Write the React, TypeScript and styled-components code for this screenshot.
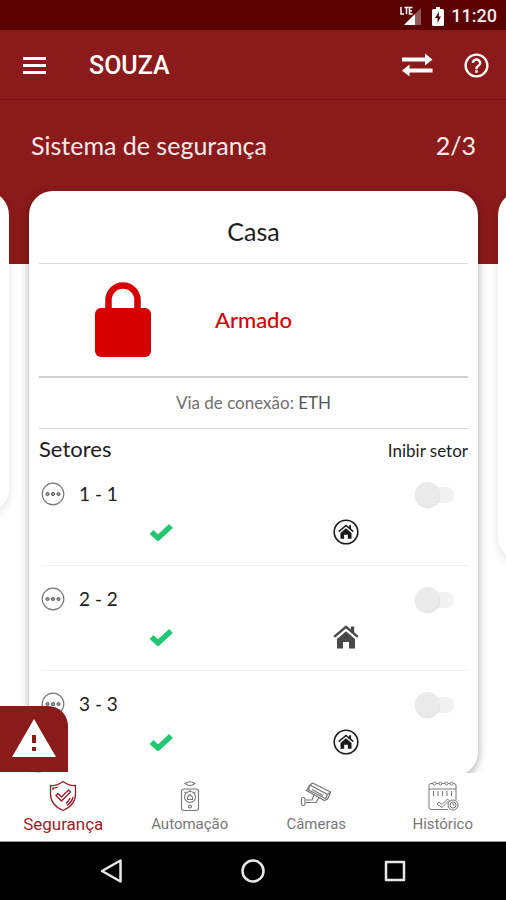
import React from "react";
import styled, { createGlobalStyle } from "styled-components";
import { MdHelpOutline, MdWarning } from "react-icons/md";

const RED = "#8b1a1a";
const LATO = 'Lato, "Open Sans", sans-serif';
const ROBOTO = 'Roboto, "Noto Sans", sans-serif';

const GlobalStyle = createGlobalStyle`
  *, *::before, *::after { box-sizing: border-box; }
  body { margin: 0; background: #fff; font-family: ${LATO}; color: #1c1c1c; }
  h1, h2, h3, p, ul { margin: 0; padding: 0; font-weight: 400; }
  ul { list-style: none; }
  button { border: 0; padding: 0; background: none; color: inherit; font: inherit; cursor: pointer; }
  svg { display: block; }
`;

const Screen = styled.div`
  display: flex;
  flex-direction: column;
  height: 100vh;
  overflow: hidden;
`;

const StatusBar = styled.div`
  display: flex;
  align-items: center;
  justify-content: flex-end;
  flex: none;
  height: 30px;
  padding: 2px 9px 0 0;
  background: #5a0000;
  color: #f6ecec;
  font: 500 18px/28px ${ROBOTO};
`;

const StatusIcons = styled.div`
  display: flex;
  align-items: center;
  gap: 10px;
  margin-right: 7px;
`;

const AppBar = styled.header`
  display: flex;
  align-items: center;
  flex: none;
  height: 70px;
  padding: 1px 15px 0 22px;
  background: ${RED};
  color: #fff;
  border-bottom: 1px solid #7a1515;
`;

const IconButton = styled.button`
  display: flex;
  align-items: center;
  justify-content: center;
`;

const AppTitle = styled.h1`
  flex: 1;
  margin-left: 42px;
  padding-top: 2px;
  font: 500 25px/32px ${ROBOTO};
`;

const AppActions = styled.div`
  display: flex;
  align-items: center;
  gap: 29px;
`;

const Main = styled.main`
  position: relative;
  flex: 1;
  min-height: 0;
  overflow: hidden;
  background: linear-gradient(${RED} 164px, #fff 164px);
`;

const Banner = styled.div`
  display: flex;
  align-items: center;
  justify-content: space-between;
  height: 91px;
  padding: 0 30px 2px 31px;
  color: #f7eaea;
  font-size: 25px;
  line-height: 30px;
`;

const BannerTitle = styled.h2`
  font-size: 25px;
`;

const Carousel = styled.div`
  display: flex;
  justify-content: center;
  align-items: flex-start;
  gap: 20px;
  padding: 0 28px 0 29px;
`;

const Card = styled.section<{ $height?: number }>`
  flex: 0 0 100%;
  min-height: ${(p) => (p.$height ? `${p.$height}px` : "0")};
  padding: 0 10px;
  border-radius: 24px;
  background: #fff;
  box-shadow: 0 3px 8px rgba(0, 0, 0, 0.35);
`;

const SideCard = styled(Card)`
  box-shadow: 0 3px 8px rgba(0, 0, 0, 0.12);
`;

const CardTitle = styled.h2`
  padding: 23px 0 15px;
  border-bottom: 1px solid #dcdcdc;
  text-align: center;
  font-size: 25px;
  line-height: 34px;
`;

const ArmState = styled.div`
  display: grid;
  grid-template-columns: 39% 22% 39%;
  align-items: center;
  justify-items: center;
  height: 114px;
  border-bottom: 2px solid #cfcfcf;
  color: #d50000;
  font-size: 22px;
  font-weight: 500;
  line-height: 28px;
`;

const Connection = styled.p`
  border-bottom: 1px solid #d6d6d6;
  color: #6f6f6f;
  text-align: center;
  font-size: 17px;
  line-height: 50px;
`;

const Strong = styled.span`
  color: #555;
`;

const SectorsHead = styled.div`
  display: flex;
  align-items: center;
  justify-content: space-between;
  height: 32px;
  padding-top: 7px;
`;

const SectorsTitle = styled.h3`
  font-size: 22px;
  line-height: 24px;
`;

const InhibitLabel = styled.span`
  padding-top: 4px;
  font-size: 17px;
  line-height: 20px;
`;

const SectorRow = styled.li`
  display: flex;
  flex-direction: column;
  gap: 10px;
  height: 105px;
  margin-left: 2px;
  padding-top: 19px;
  border-bottom: 1px solid #f1f1f1;
  &:last-child { border-bottom: 0; }
`;

const SectorTop = styled.div`
  display: flex;
  align-items: center;
  height: 28px;
  padding-right: 14px;
`;

const SectorName = styled.label`
  flex: 1;
  margin-left: 14px;
  font-size: 19px;
  line-height: 28px;
`;

const SectorIcons = styled.div`
  display: grid;
  grid-template-columns: 1fr 1fr;
  align-items: center;
  justify-items: center;
  height: 28px;
  padding: 0 30px 0 28px;
`;

const Switch = styled.input`
  appearance: none;
  position: relative;
  width: 39px;
  height: 26px;
  margin: 2px 0 0;
  cursor: pointer;
  &::before {
    content: "";
    position: absolute;
    inset: 5px 0 5px 12px;
    border-radius: 8px;
    background: #f1f1f1;
  }
  &::after {
    content: "";
    position: absolute;
    top: 0;
    left: 0;
    width: 25px;
    height: 25px;
    border-radius: 50%;
    background: #eaeaea;
    box-shadow: 0 1px 1px rgba(0, 0, 0, 0.14);
  }
  &:checked::after { left: 14px; background: ${RED}; }
`;

const AlertButton = styled.button`
  position: absolute;
  left: 0;
  bottom: 1px;
  display: flex;
  align-items: center;
  justify-content: center;
  width: 68px;
  height: 66px;
  border-radius: 0 20px 0 0;
  background: ${RED};
  color: #fff;
`;

const TabBar = styled.nav`
  display: grid;
  grid-template-columns: repeat(4, 1fr);
  flex: none;
  height: 69px;
  background: #fff;
  border-bottom: 1px solid #9a9a9a;
`;

const Tab = styled.a<{ $active?: boolean }>`
  display: flex;
  flex-direction: column;
  align-items: center;
  padding-top: 7px;
  color: ${(p) => (p.$active ? "#9c1c28" : "#777")};
  font: 400 ${(p) => (p.$active ? 17 : 15)}px/24px ${ROBOTO};
  text-decoration: none;
`;

const TabIcon = styled.span`
  display: flex;
  align-items: center;
  height: 32px;
`;

const SystemBar = styled.div`
  display: grid;
  grid-template-columns: repeat(3, 1fr);
  align-items: center;
  justify-items: center;
  flex: none;
  height: 58px;
  padding: 0 8%;
  background: #000;
  color: #e8e8e8;
`;

const SignalIcon = () => (
  <svg width="22" height="20" viewBox="0 0 22 20" aria-hidden="true">
    <path d="M21 2v17H4z" fill="#fff" opacity=".35" />
    <path d="M15 8v11H4z" fill="#fff" />
    <path d="M1 1v7h3M4.500 1.500h4M6.500 1.500V8M12.500 1.500H9.500V8h3M9.500 4.700h2.500" fill="none" stroke="#fff" strokeWidth="1.500" />
  </svg>
);

const BatteryIcon = () => (
  <svg width="12" height="19" viewBox="0 0 12 19" aria-hidden="true">
    <path d="M4 0h4v2h2.500q1.500 0 1.500 1.500v14q0 1.500-1.500 1.500h-9Q0 19 0 17.500v-14Q0 2 1.500 2H4z" fill="#fff" />
    <path d="M7 4.500L3 11h2.500v5L9 9.500H6.700z" fill="#5a0000" />
  </svg>
);

const MenuIcon = () => (
  <svg width="25" height="17" viewBox="0 0 25 17" fill="currentColor" aria-hidden="true">
    <path d="M1 0h23v3H1zM1 7h23v3H1zM1 14h23v3H1z" />
  </svg>
);

const SwapIcon = () => (
  <svg width="32" height="24" viewBox="0 0 32 24" fill="currentColor" aria-hidden="true">
    <path d="M1 4.500h23V.5L31.500 6.500l-7.500 6v-4H1zM31.500 15.500h-23v-4L1 17.500l7.500 6v-4h23z" />
  </svg>
);

const LockIcon = () => (
  <svg width="58" height="76" viewBox="0 0 58 76" aria-hidden="true">
    <path d="M14.500 28V18a14.500 14.500 0 0 1 29 0v10" fill="none" stroke="currentColor" strokeWidth="6.500" />
    <rect x="1" y="26" width="56" height="49" rx="6" fill="currentColor" />
  </svg>
);

const DotsIcon = () => (
  <svg width="24" height="24" viewBox="0 0 24 24" aria-hidden="true">
    <circle cx="12" cy="12" r="10.800" fill="none" stroke="#777" strokeWidth="1.200" />
    <g fill="#999" stroke="#555" strokeWidth=".9">
      <circle cx="6.500" cy="12" r="1.600" />
      <circle cx="12" cy="12" r="1.600" />
      <circle cx="17.500" cy="12" r="1.600" />
    </g>
  </svg>
);

const CheckIcon = () => (
  <svg width="26" height="20" viewBox="0 0 26 20" role="img" aria-label="OK">
    <path d="M3.500 10l6.500 6L23 4" fill="none" stroke="#21c871" strokeWidth="5.500" strokeLinejoin="round" />
  </svg>
);

const HouseShape = () => (
  <>
    <path d="M1.200 12.800L13 2.800l11.800 10" fill="none" stroke="currentColor" strokeWidth="2.400" />
    <path d="M18 2.500h3.200v7L18 6.800z" fill="currentColor" />
    <path d="M13 7.200l9 7.800v9.500h-6v-6.500h-6v6.500H4V15z" fill="currentColor" />
  </>
);

const HouseIcon = () => (
  <svg width="26" height="26" viewBox="0 0 26 26" color="#484848" role="img" aria-label="Casa">
    <HouseShape />
  </svg>
);

const CircledHouseIcon = () => (
  <svg width="26" height="26" viewBox="0 0 26 26" color="#1a1a1a" role="img" aria-label="Interno">
    <circle cx="13" cy="13" r="11.800" fill="none" stroke="currentColor" strokeWidth="1.600" />
    <g transform="translate(5 4.800) scale(.615)">
      <HouseShape />
    </g>
  </svg>
);

const ShieldIcon = () => (
  <svg width="28" height="32" viewBox="0 0 28 32" fill="none" stroke="currentColor" strokeWidth="1.300" aria-hidden="true">
    <path d="M14 1.500Q8 6 1.500 5.500V14q0 11 12.500 16.500Q26.500 25 26.500 14V5.500Q20 6 14 1.500z" />
    <path d="M4 10V8q3 0 5-1M24 17q-1 5-6 8.500M21 18q-1 3-4 5.500" />
    <path d="M7 15.500l2-2 3.500 3.500 7-7 2 2-9 9z" />
  </svg>
);

const RemoteIcon = () => (
  <svg width="20" height="32" viewBox="0 0 20 32" fill="none" stroke="currentColor" strokeWidth="1.100" aria-hidden="true">
    <path d="M5 3.500q5-3.500 10 0-5 4-10 0z" />
    <rect x="1.500" y="9" width="17" height="21.500" rx="2.500" />
    <circle cx="10" cy="17" r="5.500" />
    <path d="M7.500 17l2.500-2.500 2.500 2.500v2.500h-5zM10 10v2M4.500 12l1.500 1M15.500 12L14 13" />
    <circle cx="10" cy="26.500" r="1.500" />
  </svg>
);

const CameraIcon = () => (
  <svg width="32" height="30" viewBox="0 0 32 30" fill="none" stroke="currentColor" strokeWidth="1.200" aria-hidden="true">
    <path d="M10 4l2.500-2 18 9-1 3-2 4-3 1.500-18-10z" />
    <path d="M10 4L8.500 9l17 8.500M10 4l17.500 9.500 3-2.500M27.500 13.500L25.500 18M12 8.500l11 6M14 14l-2 5H6M19 16.500l-3 5H6" />
    <rect x="1.500" y="16.500" width="3.500" height="8" rx="1.500" />
  </svg>
);

const CalendarIcon = () => (
  <svg width="32" height="32" viewBox="0 0 32 32" fill="none" stroke="currentColor" strokeWidth="1" aria-hidden="true">
    <path d="M21 29.500H4q-2 0-2-2v-22q0-2 2-2h2M9 3.500h3M15 3.500h3M21 3.500h2M26 3.500h1q2 0 2 2V20M2 9h27" />
    <circle cx="7.500" cy="3.500" r="1.500" />
    <circle cx="13.500" cy="3.500" r="1.500" />
    <circle cx="19.500" cy="3.500" r="1.500" />
    <circle cx="24.500" cy="3.500" r="1.500" />
    <circle cx="26" cy="25" r="5" />
    <circle cx="26" cy="25" r="3" />
    <path d="M6.500 11v5M11 11v5M15.500 11v5M20 11v5M24.500 11v5M10 24l2-2 3 2.500 5.500-5.500 1.500 1.500-7 7zM26 23v2h1.500" />
  </svg>
);

const sectors = [
  { name: "1 - 1", circled: true },
  { name: "2 - 2", circled: false },
  { name: "3 - 3", circled: true },
];

const tabs = [
  { label: "Segurança", Icon: ShieldIcon },
  { label: "Automação", Icon: RemoteIcon },
  { label: "Câmeras", Icon: CameraIcon },
  { label: "Histórico", Icon: CalendarIcon },
];

export default function App() {
  return (
    <>
      <GlobalStyle />
      <Screen>
        <StatusBar>
          <StatusIcons>
            <SignalIcon />
            <BatteryIcon />
          </StatusIcons>
          <time>11:20</time>
        </StatusBar>
        <AppBar>
          <IconButton aria-label="Menu"><MenuIcon /></IconButton>
          <AppTitle>SOUZA</AppTitle>
          <AppActions>
            <IconButton aria-label="Trocar"><SwapIcon /></IconButton>
            <IconButton aria-label="Ajuda"><MdHelpOutline size={29} /></IconButton>
          </AppActions>
        </AppBar>
        <Main>
          <Banner>
            <BannerTitle>Sistema de segurança</BannerTitle>
            <span>2/3</span>
          </Banner>
          <Carousel>
            <SideCard $height={322} aria-hidden="true" />
            <Card>
              <CardTitle>Casa</CardTitle>
              <ArmState>
                <LockIcon />
                <span>Armado</span>
              </ArmState>
              <Connection>Via de conexão: <Strong>ETH</Strong></Connection>
              <SectorsHead>
                <SectorsTitle>Setores</SectorsTitle>
                <InhibitLabel>Inibir setor</InhibitLabel>
              </SectorsHead>
              <ul>
                {sectors.map((s, i) => (
                  <SectorRow key={s.name}>
                    <SectorTop>
                      <DotsIcon />
                      <SectorName htmlFor={`sector-${i}`}>{s.name}</SectorName>
                      <Switch id={`sector-${i}`} type="checkbox" />
                    </SectorTop>
                    <SectorIcons>
                      <CheckIcon />
                      {s.circled ? <CircledHouseIcon /> : <HouseIcon />}
                    </SectorIcons>
                  </SectorRow>
                ))}
              </ul>
            </Card>
            <SideCard $height={370} aria-hidden="true" />
          </Carousel>
          <AlertButton aria-label="Alerta"><MdWarning size={48} /></AlertButton>
        </Main>
        <TabBar>
          {tabs.map(({ label, Icon }, i) => (
            <Tab key={label} href="#" $active={i === 0}>
              <TabIcon><Icon /></TabIcon>
              {label}
            </Tab>
          ))}
        </TabBar>
        <SystemBar>
          <IconButton aria-label="Voltar">
            <svg width="24" height="26" viewBox="0 0 24 26" fill="none" stroke="currentColor" strokeWidth="2.500" strokeLinejoin="round">
              <path d="M21.500 2.500v21L3 13z" />
            </svg>
          </IconButton>
          <IconButton aria-label="Início">
            <svg width="26" height="26" viewBox="0 0 26 26" fill="none" stroke="currentColor" strokeWidth="2.500">
              <circle cx="13" cy="13" r="10.500" />
            </svg>
          </IconButton>
          <IconButton aria-label="Recentes">
            <svg width="22" height="22" viewBox="0 0 22 22" fill="none" stroke="currentColor" strokeWidth="2.500" strokeLinejoin="round">
              <rect x="2" y="2" width="18" height="18" />
            </svg>
          </IconButton>
        </SystemBar>
      </Screen>
    </>
  );
}
